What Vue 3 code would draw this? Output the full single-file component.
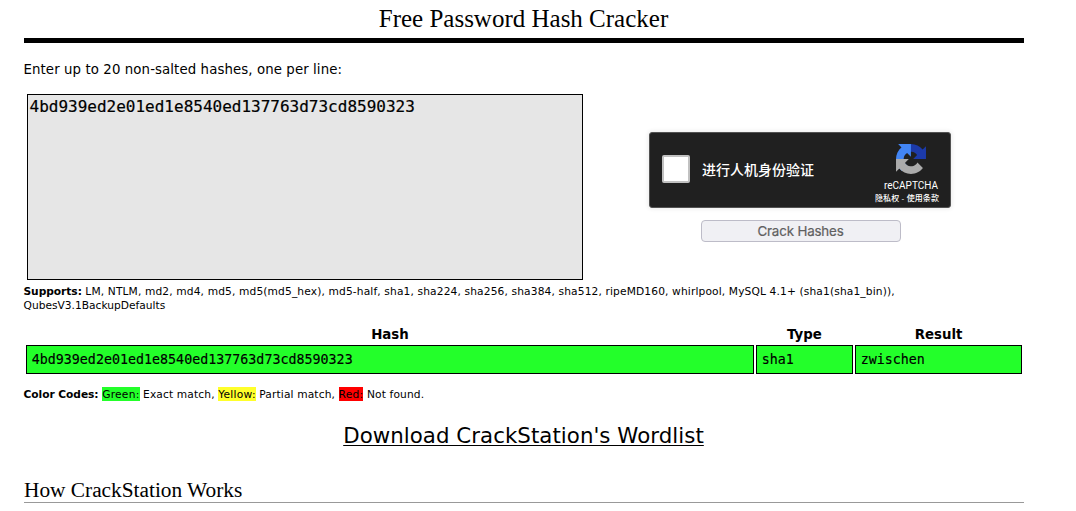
<script setup>
const results = [
  { hash: '4bd939ed2e01ed1e8540ed137763d73cd8590323', type: 'sha1', result: 'zwischen' },
]
const hashes = results.map((r) => r.hash).join('\n')
</script>

<template>
  <main class="page">
    <h1>Free Password Hash Cracker</h1>
    <p class="intro"><span>Enter up to 20 non-salted hashes, one per line:</span></p>

    <form class="cracker" @submit.prevent>
      <textarea class="input" spellcheck="false" :value="hashes"></textarea>
      <div class="side">
        <div class="captcha">
          <span class="box"></span>
          <span class="label">进行人机身份验证</span>
          <div class="brand">
            <svg width="30" height="30" viewBox="0 0 64 64">
              <path fill="#1c3aa9" d="M64 31.955l-.033-1.37V4.687l-7.16 7.16C50.948 4.674 42.033.093 32.05.093c-10.4 0-19.622 4.96-25.458 12.64l11.736 11.86a15.55 15.55 0 0 1 4.754-5.334c2.05-1.6 4.952-2.906 8.968-2.906.485 0 .86.057 1.135.163 4.976.393 9.288 3.14 11.828 7.124l-8.307 8.307L64 31.953" />
              <path fill="#4285f4" d="M31.862.094l-1.37.033H4.594l7.16 7.16C4.58 13.147 0 22.06 0 32.046c0 10.4 4.96 19.622 12.64 25.458L24.5 45.768a15.55 15.55 0 0 1-5.334-4.754c-1.6-2.05-2.906-4.952-2.906-8.968 0-.485.057-.86.163-1.135.393-4.976 3.14-9.288 7.124-11.828l8.307 8.307L31.86.095" />
              <path fill="#ababab" d="M.001 32.045l.033 1.37v25.898l7.16-7.16c5.86 7.173 14.774 11.754 24.76 11.754 10.4 0 19.622-4.96 25.458-12.64l-11.736-11.86a15.55 15.55 0 0 1-4.754 5.334c-2.05 1.6-4.952 2.906-8.968 2.906-.485 0-.86-.057-1.135-.163-4.976-.393-9.288-3.14-11.828-7.124l8.307-8.307c-10.522.04-22.4.066-27.295-.005" />
            </svg>
            <span class="name">reCAPTCHA</span>
            <span class="terms">隐私权 - 使用条款</span>
          </div>
        </div>
        <button class="submit" disabled>Crack Hashes</button>
      </div>
    </form>

    <p class="supports">
      <b>Supports:</b> LM, NTLM, md2, md4, md5, md5(md5_hex), md5-half, sha1, sha224, sha256, sha384, sha512, ripeMD160, whirlpool, MySQL 4.1+ (sha1(sha1_bin)),<br /><span class="last">QubesV3.1BackupDefaults</span>
    </p>

    <table class="results">
      <thead>
        <tr><th class="c-hash">Hash</th><th class="c-type">Type</th><th>Result</th></tr>
      </thead>
      <tbody>
        <tr v-for="r in results" :key="r.hash">
          <td>{{ r.hash }}</td><td>{{ r.type }}</td><td>{{ r.result }}</td>
        </tr>
      </tbody>
    </table>

    <p class="codes">
      <b>Color Codes:</b> <span class="green">Green:</span> Exact match, <span class="yellow">Yellow:</span> Partial match, <span class="red">Red:</span> Not found.
    </p>

    <p class="download"><a>Download CrackStation's Wordlist</a></p>
    <h2>How CrackStation Works</h2>
  </main>
</template>

<style>
body {
  background: #fff;
  overflow: hidden;
}
</style>

<style scoped>
.page {
  box-sizing: border-box;
  width: 1000px;
  height: 511px;
  margin-left: 24px;
  color: #000;
  font-family: Verdana, "DejaVu Sans", sans-serif;
}
h1,
h2,
p {
  margin: 0;
  font-weight: normal;
}
h1 {
  height: 38px;
  border-bottom: 5px solid #000;
  font: 25px/38px "Liberation Serif", serif;
  text-align: center;
  text-indent: -1px;
}
.intro {
  height: 51px;
  font-size: 13.33px;
  line-height: 53px;
  letter-spacing: 0.09px;
  text-indent: -0.5px;
}
.cracker {
  display: flex;
  height: 186px;
  padding-left: 3px;
}
.input {
  box-sizing: border-box;
  width: 556px;
  height: 186px;
  margin: 0;
  padding: 2px 2px 2px 1.5px;
  border: 1px solid #000;
  border-radius: 0;
  background: #e6e6e6;
  color: #000;
  font: 16px/19px "DejaVu Sans Mono", monospace;
  -webkit-text-stroke: 0.2px #000;
  resize: none;
  outline: none;
  overflow: hidden;
}
.side {
  display: flex;
  flex-direction: column;
  align-items: center;
  width: 302px;
  margin-left: 66px;
  padding-top: 38px;
}
.captcha {
  box-sizing: border-box;
  display: flex;
  width: 302px;
  height: 76px;
  border: 1px solid #525252;
  border-radius: 3px;
  background: #202020;
  box-shadow: 0 0 4px 1px rgba(0, 0, 0, 0.08);
  color: #fff;
}
.box {
  box-sizing: border-box;
  width: 28px;
  height: 28px;
  margin: 22px 0 0 12px;
  border: 2px solid #c1c1c1;
  border-radius: 2px;
  background: #fff;
}
.label {
  width: 160px;
  margin-left: 12px;
  font: 500 14px/72px "Noto Sans CJK SC", sans-serif;
}
.brand {
  display: flex;
  flex-direction: column;
  align-items: center;
  width: 76px;
  margin-left: 11px;
  padding-top: 11px;
  white-space: nowrap;
}
.brand svg {
  margin-left: -1px;
}
.name {
  margin-top: 5px;
  font: 10px/14px Roboto, sans-serif;
}
.terms {
  margin-left: -8px;
  font: 500 8px/11px "Liberation Sans", "Noto Sans CJK SC", sans-serif;
  letter-spacing: 0.1px;
}
.submit {
  box-sizing: border-box;
  width: 200px;
  height: 22px;
  margin: 12px 0 0 2px;
  padding: 0 1px 0 0;
  border: 1px solid #bdbcc8;
  border-radius: 4px;
  background: #f0f0f4;
  color: #606060;
  font: 13.33px/20px Inter, sans-serif;
  letter-spacing: -0.15px;
  -webkit-text-stroke: 0.2px #606060;
}
.supports,
.codes {
  font-size: 10.67px;
  line-height: 14px;
  letter-spacing: 0.13px;
  text-indent: -0.5px;
  white-space: nowrap;
}
.supports b,
.codes b {
  letter-spacing: -0.05px;
}
.supports {
  height: 28px;
  margin-top: 5px;
}
.last {
  margin-left: -0.5px;
  letter-spacing: 0;
}
.results {
  width: 1000px;
  margin-top: 10px;
  border-spacing: 2px;
  table-layout: fixed;
}
th {
  height: 17px;
  padding: 1px 0 0;
  font-size: 13.33px;
  line-height: 17px;
}
.c-hash {
  width: 728px;
}
.c-type {
  width: 97px;
}
td {
  box-sizing: border-box;
  height: 29px;
  padding: 0 5px 0 4.7px;
  border: 1px solid #000;
  background: #23ff2a;
  font: 13.33px/27px "DejaVu Sans Mono", monospace;
  -webkit-text-stroke: 0.15px #000;
}
.codes {
  height: 14px;
  margin-top: 11px;
  line-height: 15px;
}
.green,
.yellow,
.red {
  display: inline-block;
  height: 14px;
  text-indent: 0;
  letter-spacing: 0.25px;
}
.green {
  background: #23ff2a;
}
.yellow {
  background: #ffff2b;
}
.red {
  background: #f00;
}
.download {
  height: 30px;
  margin-top: 20px;
  font-size: 21.33px;
  line-height: 30px;
  letter-spacing: 0.04px;
  text-align: center;
  text-indent: -1px;
}
.download a {
  text-decoration: underline;
  text-decoration-thickness: 1px;
  text-underline-offset: 2px;
  text-decoration-skip-ink: none;
}
h2 {
  height: 24px;
  margin-top: 27px;
  border-bottom: 1px solid #999;
  font: 21.33px/24px "Liberation Serif", serif;
}
</style>
